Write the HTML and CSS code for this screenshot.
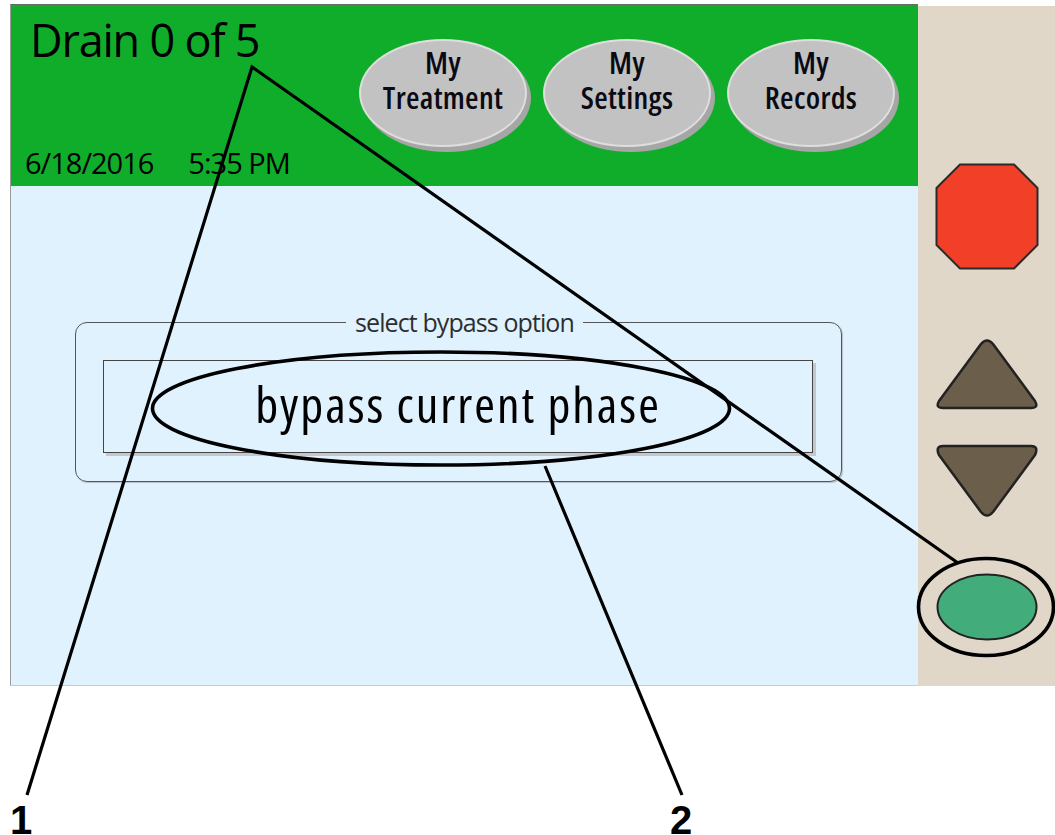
FILE: index.html
```html
<!DOCTYPE html>
<html>
<head>
<meta charset="utf-8">
<link rel="stylesheet" href="styles.css">
</head>
<body>
<div class="device">
  <div class="screen">
    <div class="header">
      <div class="status">
        <div class="title">Drain 0 of 5</div>
        <div class="datetime"><span>6/18/2016</span><span>5:35 PM</span></div>
      </div>
      <div class="navs">
        <div class="nav">My<br>Treatment</div>
        <div class="nav">My<br>Settings</div>
        <div class="nav">My<br>Records</div>
      </div>
    </div>
    <div class="content">
      <fieldset class="options">
        <legend>select bypass option</legend>
        <div class="option">bypass current phase</div>
      </fieldset>
    </div>
  </div>
  <div class="panel">
    <svg class="stop" width="104" height="107" viewBox="0 0 104 107"><polygon points="25,1.5 79,1.5 102.5,25 102.5,82 79,105.5 25,105.5 1.5,82 1.5,25" fill="#f24028" stroke="#2a2a2a" stroke-width="2" stroke-linejoin="round"/></svg>
    <svg class="up" width="104" height="72" viewBox="0 0 104 72"><path d="M46,6 Q52,-1 58,6 L100,63 Q104,70 96,70 L8,70 Q0,70 4,63 Z" fill="#6b5e4b" stroke="#222" stroke-width="2.5" stroke-linejoin="round"/></svg>
    <svg class="down" width="104" height="74" viewBox="0 0 104 74"><path d="M46,68 Q52,75 58,68 L100,11 Q104,2 96,2 L8,2 Q0,2 4,11 Z" fill="#6b5e4b" stroke="#222" stroke-width="2.5" stroke-linejoin="round"/></svg>
    <svg class="ok" width="102" height="68" viewBox="0 0 102 68"><ellipse cx="51" cy="34" rx="49.5" ry="32.5" fill="#42ad7a" stroke="#222" stroke-width="2"/></svg>
  </div>
</div>
<svg class="callouts" width="1055" height="835" viewBox="0 0 1055 835">
  <g fill="none" stroke="#000" stroke-width="3.2">
    <polyline points="27,795 252,67 958,563"/>
    <line x1="545" y1="466" x2="682" y2="795"/>
    <ellipse cx="441" cy="408.5" rx="288.5" ry="56.5" stroke-width="3.6"/>
    <ellipse cx="986" cy="607" rx="67.5" ry="48.5" stroke-width="3.6"/>
  </g>
  <text class="label" x="10" y="834">1</text>
  <text class="label" x="670" y="834">2</text>
</svg>
</body>
</html>
```
FILE: styles.css
```css
html, body {
  margin: 0;
  padding: 0;
  background: #ffffff;
  width: 1055px;
  height: 835px;
  overflow: hidden;
}
body {
  position: relative;
  font-family: "Open Sans", "Noto Sans", sans-serif;
  color: #000;
}
.device {
  display: flex;
  align-items: flex-start;
  padding: 4px 0 0 10px;
}
.screen {
  width: 908px;
  height: 682px;
  box-sizing: border-box;
  border-top: 1px solid #6a6a6a;
  border-left: 1px solid #9a9a9a;
  border-bottom: 1px solid #c8ccd0;
  display: flex;
  flex-direction: column;
}
.header {
  height: 181px;
  flex: none;
  background: #10ad2a;
  display: flex;
}
.status {
  flex: 1;
  display: flex;
  flex-direction: column;
  justify-content: space-between;
  padding: 12px 0 9px 14px;
}
.title {
  font-size: 45px;
  line-height: 1;
  font-stretch: 93%;
  letter-spacing: -1.2px;
  margin-left: 5px;
}
.datetime {
  font-size: 29px;
  line-height: 1;
  font-stretch: 90%;
  letter-spacing: -1px;
  display: flex;
  gap: 35px;
}
.navs {
  display: flex;
  gap: 16px;
  margin: 34px 23px 0 0;
  align-self: flex-start;
}
.nav {
  width: 168px;
  height: 108px;
  box-sizing: border-box;
  border-radius: 50%;
  background: #c2c2c2;
  border: 2px solid #dedede;
  box-shadow: 4px 5px 0 #a6a6a6;
  display: flex;
  align-items: center;
  justify-content: center;
  text-align: center;
  font-size: 31px;
  line-height: 35px;
  font-stretch: 75%;
  letter-spacing: 0.3px;
  font-weight: 600;
  color: #0a0a14;
  padding-bottom: 26px;
}
.content {
  flex: 1;
  background: #dff2fe;
  padding-top: 121px;
}
.options {
  margin: 0 0 0 64px;
  width: 767px;
  box-sizing: border-box;
  border: 1px solid #555;
  border-radius: 12px;
  padding: 23px 28px 28px 27px;
  box-shadow: 1px 1px 1px #b8c0c8;
}
.options legend {
  margin-left: 243px;
  padding: 0 9px;
  font-size: 25px;
  line-height: 30px;
  font-stretch: 88%;
  letter-spacing: -0.9px;
  color: #2e2e2e;
}
.option {
  height: 93px;
  box-sizing: border-box;
  border: 1px solid #444;
  box-shadow: 3px 3px 0 #c4c8cc;
  display: flex;
  align-items: center;
  justify-content: center;
  font-size: 50px;
  font-stretch: 75%;
  letter-spacing: 2px;
  padding-bottom: 6px;
}
.panel {
  width: 137px;
  height: 680px;
  margin-top: 2px;
  background: #e0d7c9;
  display: flex;
  flex-direction: column;
  align-items: center;
  padding-top: 157px;
  box-sizing: border-box;
}
.panel svg { display: block; }
.up { margin-top: 68px; }
.down { margin-top: 34px; }
.ok { margin-top: 55px; }
.callouts {
  position: absolute;
  left: 0;
  top: 0;
  pointer-events: none;
}
.label {
  font-family: "Liberation Sans", Arial, sans-serif;
  font-weight: bold;
  font-size: 40px;
  fill: #000;
}
```
